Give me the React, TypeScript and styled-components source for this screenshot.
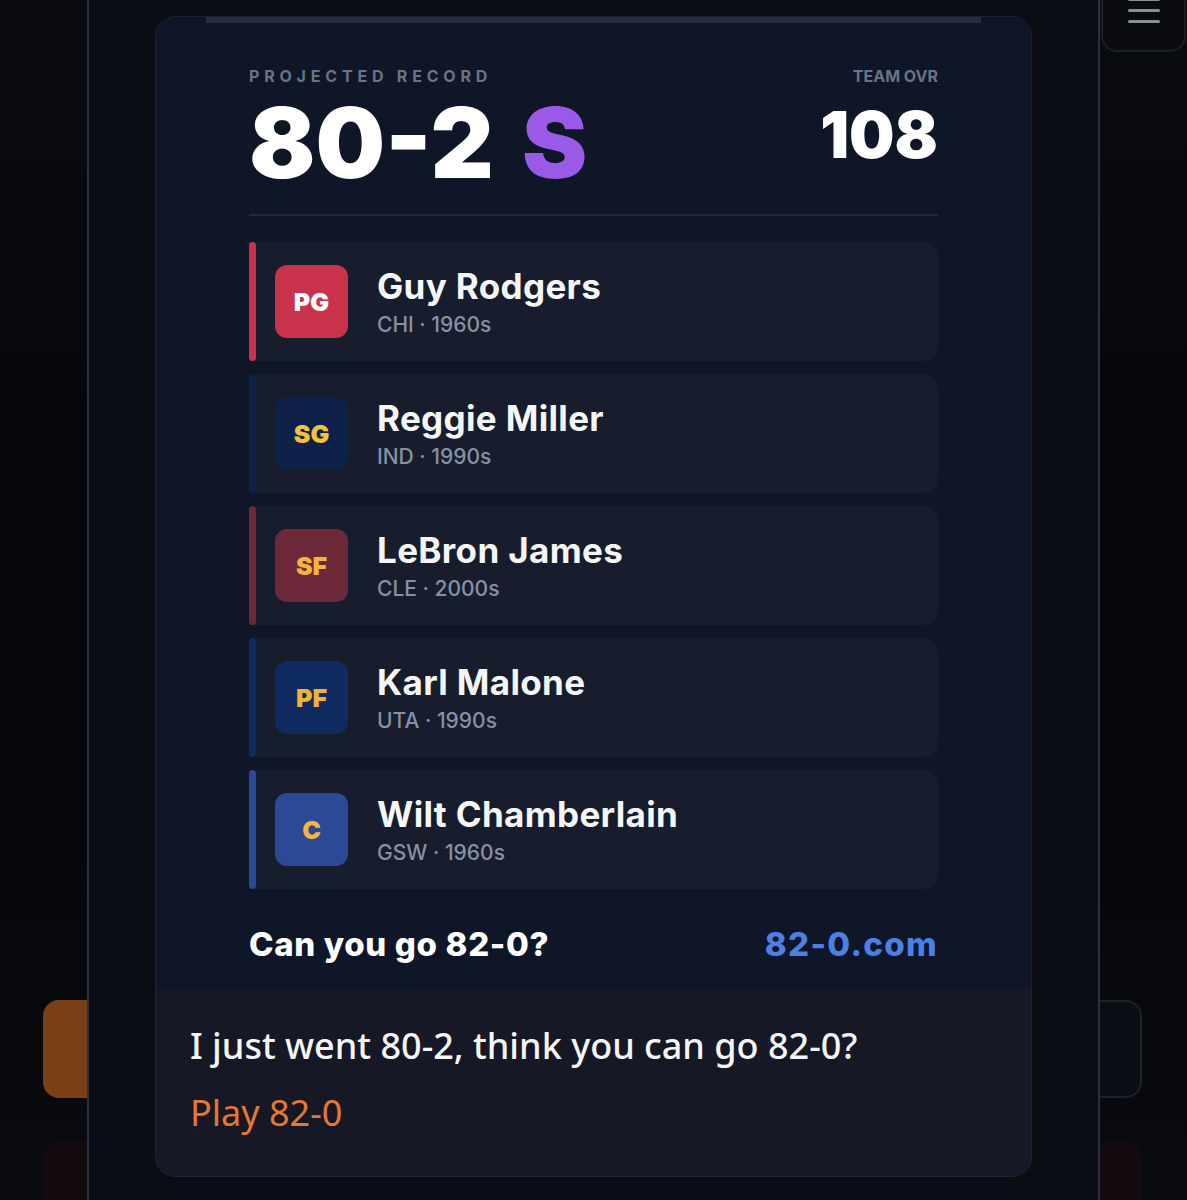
import styled, { createGlobalStyle } from "styled-components";

type Player = {
  pos: string;
  name: string;
  team: string;
  era: string;
  accent: string;
  badgeBg: string;
  badgeText: string;
};

const players: Player[] = [
  { pos: "PG", name: "Guy Rodgers", team: "CHI", era: "1960s", accent: "#c8334b", badgeBg: "#c8334b", badgeText: "#ffffff" },
  { pos: "SG", name: "Reggie Miller", team: "IND", era: "1990s", accent: "#0e2148", badgeBg: "#0e2148", badgeText: "#f2c13d" },
  { pos: "SF", name: "LeBron James", team: "CLE", era: "2000s", accent: "#6b2939", badgeBg: "#6b2939", badgeText: "#f4b53f" },
  { pos: "PF", name: "Karl Malone", team: "UTA", era: "1990s", accent: "#0f2b5f", badgeBg: "#0f2b5f", badgeText: "#f2b234" },
  { pos: "C", name: "Wilt Chamberlain", team: "GSW", era: "1960s", accent: "#2b4994", badgeBg: "#2b4994", badgeText: "#f4b63d" },
];

const GlobalStyle = createGlobalStyle`
  html, body {
    margin: 0;
    padding: 0;
    background: #07080c;
  }
  * {
    box-sizing: border-box;
  }
`;

export default function App() {
  return (
    <>
      <GlobalStyle />
      <Page>
        <Header>
          <MenuButton aria-label="Menu">
            <MenuLine />
            <MenuLine />
            <MenuLine />
          </MenuButton>
        </Header>
        <Spacer />
        <ActionRow>
          <ActionButton $variant="orange" />
          <ActionButton $variant="dark" />
        </ActionRow>
        <ActionRow $faded>
          <ActionButton $variant="red" />
          <ActionButton $variant="red" />
        </ActionRow>
      </Page>

      <Sheet>
        <PreviewCard>
          <ShareImage>
            <TopStrip />
            <ScoreHeader>
              <ScoreBlock>
                <Label $spaced>Projected Record</Label>
                <Record>
                  80-2<Grade>S</Grade>
                </Record>
              </ScoreBlock>
              <OvrBlock>
                <Label>Team OVR</Label>
                <Ovr>108</Ovr>
              </OvrBlock>
            </ScoreHeader>
            <Divider />
            <Roster>
              {players.map((p) => (
                <PlayerRow key={p.pos}>
                  <AccentBar $color={p.accent} />
                  <PosBadge $bg={p.badgeBg} $fg={p.badgeText}>
                    {p.pos}
                  </PosBadge>
                  <PlayerInfo>
                    <PlayerName>{p.name}</PlayerName>
                    <PlayerMeta>
                      {p.team} · {p.era}
                    </PlayerMeta>
                  </PlayerInfo>
                </PlayerRow>
              ))}
            </Roster>
            <Footer>
              <Tagline>Can you go 82-0?</Tagline>
              <SiteLink>82-0.com</SiteLink>
            </Footer>
          </ShareImage>
          <MessageBody>
            <MessageText>I just went 80-2, think you can go 82-0?</MessageText>
            <PlayLink>Play 82-0</PlayLink>
          </MessageBody>
        </PreviewCard>
      </Sheet>
    </>
  );
}

const Page = styled.div`
  width: 1187px;
  height: 1200px;
  overflow: hidden;
  display: flex;
  flex-direction: column;
  padding: 0 45px 0 43px;
  background: linear-gradient(180deg, #0b0c12 0%, #06070a 35%, #06070a 70%, #0a0b10 100%);
`;

const Header = styled.div`
  display: flex;
  justify-content: flex-end;
  margin-right: -44px;
`;

const MenuButton = styled.div`
  width: 85px;
  height: 52px;
  border: 2px solid #1b1f29;
  border-top: none;
  border-radius: 0 0 16px 16px;
  background: #0b0c12;
  display: flex;
  flex-direction: column;
  align-items: center;
  gap: 8px;
  & > div:first-child {
    margin-top: -2px;
  }
`;

const MenuLine = styled.div`
  width: 32px;
  height: 3px;
  border-radius: 2px;
  background: #8a8e97;
`;

const Spacer = styled.div`
  flex: 1;
`;

const ActionRow = styled.div<{ $faded?: boolean }>`
  display: grid;
  grid-template-columns: 1fr 1fr;
  gap: 16px;
  height: 98px;
  flex-shrink: 0;
  margin-bottom: ${(p) => (p.$faded ? "-40px" : "44px")};
`;

const ActionButton = styled.div<{ $variant: "orange" | "dark" | "red" }>`
  border-radius: 16px;
  background: ${(p) =>
    p.$variant === "orange" ? "#7a3f14" : p.$variant === "red" ? "#130b0f" : "#0b0d14"};
  border: 2px solid ${(p) => (p.$variant === "dark" ? "#1d212b" : "transparent")};
`;

const Sheet = styled.div`
  position: fixed;
  top: 0;
  bottom: 0;
  left: 87px;
  width: 1013px;
  background: #0b0d15;
  border-left: 2px solid #283042;
  border-right: 2px solid #283042;
  display: flex;
  justify-content: center;
  padding-top: 16px;
`;

const PreviewCard = styled.div`
  width: 877px;
  height: 1161px;
  border: 1px solid #1d2232;
  border-radius: 20px;
  overflow: hidden;
  display: flex;
  flex-direction: column;
  background: #161925;
`;

const ShareImage = styled.div`
  background: #0f1627;
  padding: 0 93px 28px;
  display: flex;
  flex-direction: column;
  font-family: Inter, "Liberation Sans", sans-serif;
`;

const TopStrip = styled.div`
  height: 7px;
  margin: -1px -43px 0;
  background: #243040;
`;

const ScoreHeader = styled.div`
  display: flex;
  justify-content: space-between;
  align-items: flex-start;
  margin-top: 45px;
`;

const ScoreBlock = styled.div`
  display: flex;
  flex-direction: column;
  gap: 19px;
`;

const OvrBlock = styled.div`
  display: flex;
  flex-direction: column;
  align-items: flex-end;
  gap: 23px;
`;

const Label = styled.div<{ $spaced?: boolean }>`
  font-size: 16px;
  line-height: 16px;
  font-weight: 700;
  text-transform: uppercase;
  color: #6a7386;
  letter-spacing: ${(p) => (p.$spaced ? "0.3em" : "0")};
`;

const Record = styled.div`
  font-size: 98px;
  line-height: 80px;
  font-weight: 900;
  color: #ffffff;
  white-space: nowrap;
`;

const Grade = styled.span`
  color: #9b5ae6;
  margin-left: 28px;
`;

const Ovr = styled.div`
  font-size: 64px;
  line-height: 56px;
  font-weight: 900;
  color: #ffffff;
`;

const Divider = styled.div`
  height: 2px;
  background: #222a3a;
  margin-top: 31px;
`;

const Roster = styled.div`
  display: flex;
  flex-direction: column;
  gap: 13px;
  margin-top: 26px;
`;

const PlayerRow = styled.div`
  height: 119px;
  display: flex;
  align-items: center;
  background: #171d2d;
  border-radius: 4px 14px 14px 4px;
`;

const AccentBar = styled.div<{ $color: string }>`
  width: 7px;
  align-self: stretch;
  border-radius: 4px;
  background: ${(p) => p.$color};
`;

const PosBadge = styled.div<{ $bg: string; $fg: string }>`
  width: 73px;
  height: 73px;
  margin-left: 19px;
  border-radius: 12px;
  background: ${(p) => p.$bg};
  color: ${(p) => p.$fg};
  display: flex;
  align-items: center;
  justify-content: center;
  font-size: 25px;
  font-weight: 900;
`;

const PlayerInfo = styled.div`
  display: flex;
  flex-direction: column;
  margin-left: 29px;
  gap: 5px;
`;

const PlayerName = styled.div`
  font-size: 35px;
  line-height: 41px;
  font-weight: 700;
  letter-spacing: 0.01em;
  color: #f5f6f8;
`;

const PlayerMeta = styled.div`
  font-size: 21px;
  line-height: 26px;
  font-weight: 500;
  color: #8791a3;
`;

const Footer = styled.div`
  display: flex;
  justify-content: space-between;
  align-items: center;
  margin-top: 39px;
  font-size: 33px;
  line-height: 32px;
  font-weight: 800;
  letter-spacing: 0.02em;
`;

const Tagline = styled.div`
  color: #ffffff;
`;

const SiteLink = styled.div`
  color: #4c80e4;
  letter-spacing: 0.04em;
`;

const MessageBody = styled.div`
  flex: 1;
  padding: 36px 34px 0;
  font-family: "Noto Sans", "Open Sans", sans-serif;
`;

const MessageText = styled.div`
  font-size: 36px;
  line-height: 44px;
  font-weight: 500;
  color: #f4f5f7;
`;

const PlayLink = styled.div`
  margin-top: 24px;
  font-size: 36px;
  line-height: 41px;
  font-weight: 400;
  color: #e7782f;
`;
